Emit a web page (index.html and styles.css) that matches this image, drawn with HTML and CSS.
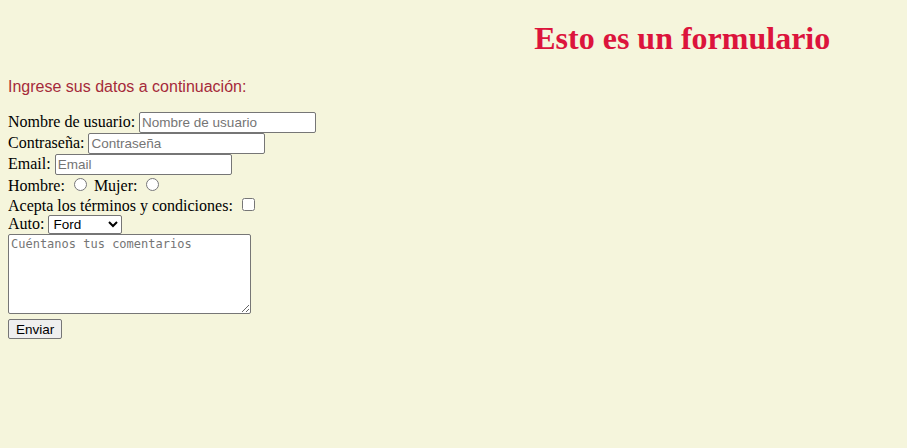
FILE: index.html
```html
<!DOCTYPE html>
<html lang="es">
<head>
<meta charset="utf-8">
<title>Formulario</title>
<link rel="stylesheet" href="styles.css">
</head>
<body>
<h1 class="title">Esto es un formulario</h1>
<p class="intro">Ingrese sus datos a continuación:</p>
<form class="form">
Nombre de usuario: <input class="text" type="text" placeholder="Nombre de usuario"><br>
Contraseña: <input class="text" type="password" placeholder="Contraseña"><br>
Email: <input class="text" type="email" placeholder="Email"><br>
Hombre: <input class="radio" type="radio" name="sexo"> Mujer: <input class="radio" type="radio" name="sexo"><br>
Acepta los términos y condiciones: <input class="check" type="checkbox"><br>
Auto: <select class="select"><option>Ford</option><option>Fiat</option><option>Toyota</option></select><br>
<textarea class="comments" placeholder="Cuéntanos tus comentarios"></textarea><br>
<button class="submit" type="submit">Enviar</button>
</form>
</body>
</html>
```
FILE: styles.css
```css
body {
  margin: 8px;
  background: #f5f5dc;
  font-family: "Liberation Serif", serif;
  font-size: 16px;
  color: #000;
}
.title {
  font-family: "Liberation Serif", serif;
  font-size: 32px;
  font-weight: bold;
  color: #dc143c;
  text-align: center;
  margin: 12px 0 21px calc(50% + 12px);
}
.intro {
  font-family: "Liberation Sans", Arial, sans-serif;
  color: #a52a3a;
  margin: 16px 0;
}
.form input, .form select, .form button {
  font-family: "Liberation Sans", Arial, sans-serif;
  font-size: 13.5px;
}
.text {
  width: 177px;
  height: 21px;
  box-sizing: border-box;
  padding: 1px 2px;
  border: 1px solid #767676;
  border-radius: 2px;
  background: #fff;
  margin: 0;
}
.text::placeholder { color: #757575; }
.radio, .check {
  margin: 3px 3px 0 5px;
}
.select {
  width: 74px;
  height: 19px;
  box-sizing: border-box;
  border: 1px solid #767676;
  border-radius: 2px;
  background: #fff;
  margin: 0;
}
.comments {
  width: 243px;
  height: 80px;
  box-sizing: border-box;
  font-family: "DejaVu Sans Mono", monospace;
  font-size: 12px;
  border: 1px solid #767676;
  border-radius: 2px;
  background: #fff;
  padding: 2px;
  margin: 0;
  vertical-align: bottom;
}
.submit {
  margin-top: 5px;
  height: 20px;
  padding: 1px 7px;
  border: 1px solid #767676;
  border-radius: 2px;
  background: #efefef;
  color: #000;
}
```
